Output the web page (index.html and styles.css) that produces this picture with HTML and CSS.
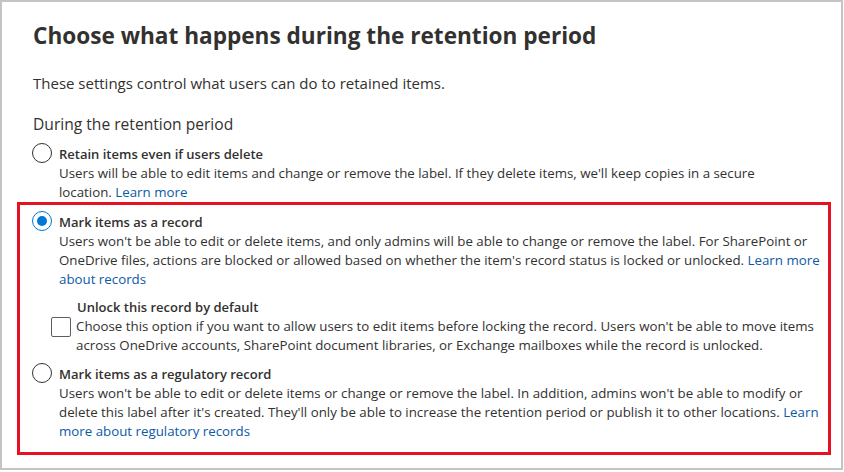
FILE: index.html
```html
<!DOCTYPE html>
<html lang="en">
<head>
<meta charset="utf-8">
<title>Retention settings</title>
<link rel="stylesheet" href="styles.css">
</head>
<body>
<div class="frame">
  <h1 class="title">Choose what happens during the retention period</h1>
  <p class="intro">These settings control what users can do to retained items.</p>
  <h2 class="section">During the retention period</h2>

  <div class="option first">
    <span class="radio"></span>
    <div class="text">
      <div class="label">Retain items even if users delete</div>
      <div class="desc">Users will be able to edit items and change or remove the label. If they delete items, we'll keep copies in a secure<br>location. <a class="link">Learn more</a></div>
    </div>
  </div>

  <div class="highlight">
    <div class="option">
      <span class="radio checked"></span>
      <div class="text">
        <div class="label">Mark items as a record</div>
        <div class="desc">Users won't be able to edit or delete items, and only admins will be able to change or remove the label. For SharePoint or<br>OneDrive files, actions are blocked or allowed based on whether the item's record status is locked or unlocked. <a class="link">Learn more<br>about records</a></div>
      </div>
    </div>

    <div class="sub">
      <div class="sublabel">Unlock this record by default</div>
      <div class="subrow">
        <span class="checkbox"></span>
        <div class="desc">Choose this option if you want to allow users to edit items before locking the record. Users won't be able to move items<br>across OneDrive accounts, SharePoint document libraries, or Exchange mailboxes while the record is unlocked.</div>
      </div>
    </div>

    <div class="option">
      <span class="radio"></span>
      <div class="text">
        <div class="label">Mark items as a regulatory record</div>
        <div class="desc">Users won't be able to edit or delete items or change or remove the label. In addition, admins won't be able to modify or<br>delete this label after it's created. They'll only be able to increase the retention period or publish it to other locations. <a class="link">Learn<br>more about regulatory records</a></div>
      </div>
    </div>
  </div>
</div>
</body>
</html>
```

FILE: styles.css
```css
* { box-sizing: border-box; }
html, body { margin: 0; padding: 0; background: #ffffff; }
body {
  font-family: "Segoe UI", "Open Sans", "Noto Sans", sans-serif;
  color: #323130;
}
.frame {
  width: 843px;
  height: 470px;
  border: 2px solid #c4c4c4;
  padding: 0 0 0 15px;
  overflow: hidden;
}
.title {
  margin: 19px 0 0 16px;
  font-size: 22.6px;
  font-weight: 700;
  line-height: 30px;
  white-space: nowrap;
}
.intro {
  margin: 22px 0 0 16px;
  font-size: 15px;
  line-height: 20px;
}
.section {
  margin: 21px 0 0 16px;
  font-size: 15.6px;
  font-weight: 400;
  line-height: 20px;
}
.option {
  display: flex;
  align-items: flex-start;
  gap: 7px;
}
.option.first {
  margin: 10px 0 0 15px;
}
.radio {
  flex: none;
  width: 20px;
  height: 20px;
  border: 1px solid #323130;
  border-radius: 50%;
  position: relative;
  margin-top: -1px;
}
.radio.checked {
  border-color: #0078d4;
}
.radio.checked::after {
  content: "";
  position: absolute;
  left: 4px;
  top: 4px;
  width: 10px;
  height: 10px;
  border-radius: 50%;
  background: #0078d4;
}
.label {
  font-size: 13px;
  font-weight: 600;
  line-height: 20px;
}
.desc {
  font-size: 13.3px;
  line-height: 19px;
  white-space: nowrap;
}
.link {
  color: #0b5aa6;
  text-decoration: none;
}
.highlight {
  margin-top: 0;
  width: 814px;
  height: 253px;
  border: 3px solid #e81123;
  padding: 7px 0 0 12px;
}
.sub {
  margin: 8px 0 0 20px;
}
.sublabel {
  margin-left: 25px;
  font-size: 13px;
  font-weight: 600;
  line-height: 20px;
}
.subrow {
  display: flex;
  align-items: flex-start;
  gap: 5px;
}
.checkbox {
  flex: none;
  width: 20px;
  height: 20px;
  margin-left: -1px;
  border: 1px solid #605e5c;
  border-radius: 2px;
}
.sub + .option {
  margin-top: 9px;
}
```
